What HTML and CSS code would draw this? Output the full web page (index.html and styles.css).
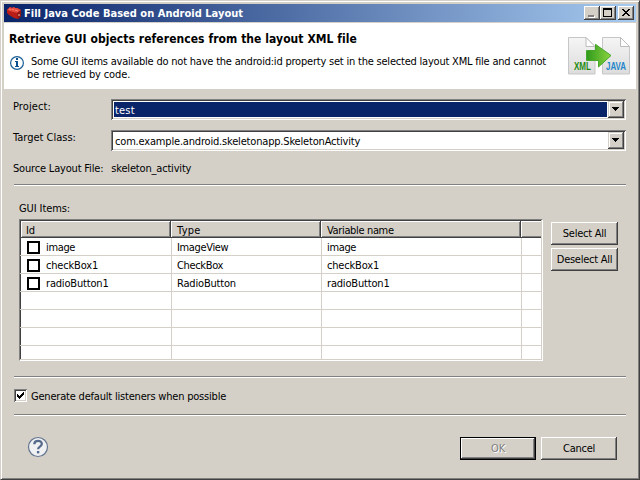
FILE: index.html
```
<!DOCTYPE html>
<html lang="en">
<head>
<meta charset="utf-8">
<title>Fill Java Code Based on Android Layout</title>
<link rel="stylesheet" href="styles.css">
</head>
<body>
<div class="window">
  <header class="titlebar">
    <svg class="app-icon" width="16" height="16" viewBox="0 0 16 16"><path d="M1 5l3-3 2 1 2-1 1 1 2 0 4 2v6l-3 3-4-1-5-3-2-2z" fill="#b81d18"/><path d="M1 5l3-3 2 1 2-1 1 1 2 0 4 2-3 3-5-1z" fill="#e5483c"/><path d="M11 8l4-3v6l-3 3z" fill="#8e1712"/><path d="M3 4l2 1M6 4l2 1M9 5l3 1" stroke="#ff8073"/><circle cx="13" cy="10" r="1" fill="#db8b82"/></svg>
    <span class="title">Fill Java Code Based on Android Layout</span>
    <div class="controls">
      <div class="ctl"><svg width="16" height="14" shape-rendering="crispEdges"><path d="M5 10h6v2H5z" fill="#fff"/><path d="M4 9h6v2H4z" fill="#808080"/></svg></div>
      <div class="ctl"><svg width="16" height="14" shape-rendering="crispEdges"><path d="M3 2h9v9H3zM4 4v6h7V4z" fill="#000" fill-rule="evenodd"/></svg></div>
      <div class="ctl close"><svg width="16" height="14" shape-rendering="crispEdges"><path d="M4 3h2v1h1v1h2V4h1V3h2v1h-1v1h-1v1H9v1h1v1h1v1h1v1h-2V9H9V8H7v1H6v1H4V9h1V8h1V7h1V6H6V5H5V4H4z" fill="#000"/></svg></div>
    </div>
  </header>

  <section class="banner">
    <div class="banner-text">
      <h1>Retrieve GUI objects references from the layout XML file</h1>
      <div class="message">
        <svg width="16" height="16" viewBox="0 0 16 16"><circle cx="8" cy="8" r="6.4" fill="#fff" stroke="#1b5e96" stroke-width="1.2"/><path d="M7 3h2v2H7zM6 6h3v5h1v1H6v-1h1V7H6z" fill="#0b4f8c"/></svg>
        <p><span class="line first">Some GUI items available do not have the android:id property set in the selected layout XML file and cannot</span><span class="line second">be retrieved by code.</span></p>
      </div>
    </div>
    <svg class="convert" width="64" height="40" viewBox="0 0 64 40">
      <defs>
        <linearGradient id="page" x1="0" y1="0" x2="0" y2="1"><stop offset="0" stop-color="#f5f5f5"/><stop offset="1" stop-color="#dcdcdc"/></linearGradient>
        <linearGradient id="arrow" x1="0" y1="0" x2="1" y2="0"><stop offset="0" stop-color="#2f9a1c"/><stop offset="1" stop-color="#8bd43e"/></linearGradient>
      </defs>
      <g fill="url(#page)" stroke="#c6c6c6"><path d="M.5 1.5h17.500l9 9v27.500H.5z"/><path d="M34.500 1.500h18l9 9v27.500h-27z"/></g>
      <g fill="#fff" stroke="#bcbcbc"><path d="M18 1.500v9h9z"/><path d="M52.500 1.500v9h9z"/></g>
      <path d="M18.500 14.500h9V8.300L43 19.500 30.500 31V24.500h-12z" fill="url(#arrow)" stroke="#47a72a"/>
      <text class="tag xml" x="6" y="34" textLength="17" lengthAdjust="spacingAndGlyphs">XML</text>
      <text class="tag java" x="38" y="34" textLength="20" lengthAdjust="spacingAndGlyphs">JAVA</text>
    </svg>
  </section>

  <main class="content">
    <div class="field"><label class="w-project">Project:</label>
      <div class="combo focused"><span class="value w-test">test</span><span class="drop"><svg width="7" height="4" shape-rendering="crispEdges"><path d="M0 0h7v1H6v1H5v1H4v1H3V3H2V2H1V1H0z"/></svg></span></div></div>
    <div class="field"><label class="w-target">Target Class:</label>
      <div class="combo"><span class="value w-class">com.example.android.skeletonapp.SkeletonActivity</span><span class="drop"><svg width="7" height="4" shape-rendering="crispEdges"><path d="M0 0h7v1H6v1H5v1H4v1H3V3H2V2H1V1H0z"/></svg></span></div></div>
    <div class="source"><span>Source Layout File:</span><span>skeleton_activity</span></div>
    <div class="rule"></div>

    <div class="items-label">GUI Items:</div>
    <div class="items">
      <div class="table">
        <div class="row head"><div>Id</div><div class="w-type">Type</div><div class="tight">Variable name</div><div></div></div>
        <div class="row"><div><i class="check"></i><span class="tight">image</span></div><div class="tight">ImageView</div><div class="tight">image</div><div></div></div>
        <div class="row"><div><i class="check"></i><span>checkBox1</span></div><div class="tight">CheckBox</div><div>checkBox1</div><div></div></div>
        <div class="row"><div><i class="check"></i><span>radioButton1</span></div><div>RadioButton</div><div>radioButton1</div><div></div></div>
        <div class="row"><div></div><div></div><div></div><div></div></div>
        <div class="row"><div></div><div></div><div></div><div></div></div>
        <div class="row"><div></div><div></div><div></div><div></div></div>
        <div class="row last"><div></div><div></div><div></div><div></div></div>
      </div>
      <div class="side"><button class="btn">Select All</button><button class="btn">Deselect All</button></div>
    </div>

    <div class="rule after-table"></div>
    <label class="option"><span class="box"><svg width="7" height="7" shape-rendering="crispEdges"><path d="M0 2h1v1h1v1h1V3h1V2h1V1h1V0h1v3H6v1H5v1H4v1H3v1H2V6H1V5H0z"/></svg></span><span class="option-text">Generate default listeners when possible</span></label>
    <div class="rule after-option"></div>

    <footer>
      <svg class="help" width="22" height="22" viewBox="0 0 22 22"><circle cx="11" cy="11" r="9.500" fill="#f0f1f3" stroke="#62758f" stroke-width="1.200"/><path d="M7.300 8.200C7.500 3.800 15 3.900 14.800 8c-.1 2.700-3.700 2.500-3.700 5.200" fill="none" stroke="#566b8b" stroke-width="2.300"/><path d="M9.900 15h2.400v2.400H9.900z" fill="#566b8b"/></svg>
      <div class="actions"><button class="btn ok" disabled>OK</button><button class="btn">Cancel</button></div>
    </footer>
  </main>
</div>
</body>
</html>
```
FILE: styles.css
```
* { box-sizing: border-box; }
body {
  margin: 0;
  background: #d4d0c8;
  color: #000;
  font: 11px/13px "DejaVu Sans Condensed", "DejaVu Sans", sans-serif;
  letter-spacing: -0.18px;
}
svg { display: block; flex: none; }
.window {
  width: 640px;
  height: 480px;
  overflow: hidden;
  padding: 3px;
  background: #d4d0c8;
  border: 1px solid;
  border-color: #d4d0c8 #404040 #404040 #d4d0c8;
  box-shadow: inset 1px 1px #fff, inset -1px -1px #808080;
}
.titlebar {
  display: flex;
  align-items: center;
  height: 18px;
  padding: 0 2px;
  background: linear-gradient(90deg, #0a246a, #a6caf0);
  color: #fff;
  font-weight: bold;
  letter-spacing: 0.02px;
}
.title { margin-left: 2px; flex: 1; white-space: nowrap; }
.controls { display: flex; }
.ctl {
  width: 16px;
  height: 14px;
  background: #d4d0c8;
  box-shadow: inset -1px -1px #404040, inset 1px 1px #fff, inset -2px -2px #808080;
}
.close { margin-left: 2px; }
.banner {
  display: flex;
  justify-content: space-between;
  height: 66px;
  margin-top: 1px;
  background: #fff;
}
.banner-text { padding: 9px 0 0 5px; }
h1 { margin: 0; font-size: 12px; line-height: 15px; letter-spacing: 0.06px; white-space: nowrap; }
.message { display: flex; padding-top: 8px; }
.message p { margin: 0 0 0 2px; }
.line { display: block; white-space: nowrap; }
.first { letter-spacing: -0.21px; padding-left: 4px; }
.second { letter-spacing: -0.13px; }
.convert { margin: 13px 4px 0 0; }
.tag { font: bold 10px "Liberation Sans", sans-serif; letter-spacing: 0; }
.xml { fill: #258b12; }
.java { fill: #2686ca; }
.content { padding: 10px 10px 0; }
.field { display: flex; height: 31px; white-space: nowrap; }
.field label { width: 97px; padding-top: 1px; margin: 0 1px 0 -1px; }
.combo {
  display: flex;
  width: 515px;
  height: 21px;
  padding: 2px;
  background: #fff;
  box-shadow: inset 1px 1px #808080, inset -1px -1px #fff, inset 2px 2px #404040, inset -2px -2px #d4d0c8;
}
.value { flex: 1; margin: 1px; padding: 1px 0 0 1px; line-height: 15px; }
.focused .value { background: #0a246a; color: #fff; }
.drop {
  width: 16px;
  height: 17px;
  padding: 6px 0 0 4px;
  background: #d4d0c8;
  box-shadow: inset -1px -1px #404040, inset 1px 1px #d4d0c8, inset -2px -2px #808080, inset 2px 2px #fff;
}
.source { display: flex; gap: 8px; padding: 1px 0 0; margin-left: -1px; height: 23px; }
.w-project { letter-spacing: 0.1px; }
.w-target { letter-spacing: 0; }
.w-test { letter-spacing: 0.2px; }
.w-class { letter-spacing: -0.18px; }
.w-type { letter-spacing: 0.3px; }
.tight { letter-spacing: -0.35px; }
.rule { height: 2px; border-top: 1px solid #808080; border-bottom: 1px solid #fff; }
.items-label { padding: 16px 0 0 5px; height: 33px; letter-spacing: -0.1px; }
.items { display: flex; padding-left: 5px; gap: 8px; }
.table {
  width: 524px;
  height: 142px;
  overflow: hidden;
  border: 1px solid;
  border-color: #808080 #fff #fff #808080;
  background: #d4d0c8;
}
.row {
  display: grid;
  grid-template-columns: 151px 150px 200px 20px;
  grid-template-rows: 100%;
  width: 521px;
  height: 18px;
  background: #fff;
  border-bottom: 1px solid #d4d0c8;
  line-height: 15px;
  box-shadow: inset 1px 0 #404040;
}
.row > div { display: flex; align-items: center; padding: 2px 0 0 5px; }
.row > div + div { border-left: 1px solid #d4d0c8; }
.row > div:first-child { padding: 0 0 0 7px; }
.row span { padding-top: 2px; }
.row.last { height: 13px; border-bottom: 0; }
.row.head {
  border: 0;
  background: #d4d0c8;
  box-shadow: inset 1px 1px #404040, inset 0 -1px #404040;
  padding-top: 1px;
}
.row.head > div, .row.head > div + div {
  border: 0;
  padding: 2px 0 0 6px;
  box-shadow: inset -1px -1px #404040, inset 1px 1px #fff, inset -2px -2px #808080;
}
.row.head > div:first-child { margin-left: 1px; padding-left: 5px; }
.row.head > div:last-child { box-shadow: inset 0 -1px #404040, inset 1px 1px #fff, inset 0 -2px #808080; }
.check { width: 13px; height: 13px; margin: 2px 6px 0 0; border: 2px solid #000; background: #fff; }
.side { display: flex; flex-direction: column; gap: 3px; padding-top: 3px; }
.btn {
  width: 67px;
  height: 23px;
  padding: 0 0 1px;
  border: 0;
  background: #d4d0c8;
  color: #000;
  font: inherit;
  letter-spacing: -0.26px;
  white-space: nowrap;
  box-shadow: inset -1px -1px #404040, inset 1px 1px #fff, inset -2px -2px #808080;
}
.after-table { margin-top: 15px; }
.option { display: flex; align-items: center; gap: 4px; height: 13px; margin-top: 11px; letter-spacing: -0.2px; }
.option-text { padding-top: 2px; }
.box {
  width: 13px;
  height: 13px;
  padding: 3px;
  background: #fff;
  box-shadow: inset 1px 1px #808080, inset -1px -1px #fff, inset 2px 2px #404040, inset -2px -2px #d4d0c8;
}
.after-option { margin-top: 12px; }
footer { display: flex; justify-content: space-between; align-items: flex-start; padding: 21px 9px 0 13px; }
.help { margin-top: -1px; }
.actions { display: flex; gap: 5px; }
.actions .btn { width: 76px; }
.ok {
  border: 1px solid #000;
  padding: 0;
  color: #808080;
  text-shadow: 1px 1px #fff;
}
```
